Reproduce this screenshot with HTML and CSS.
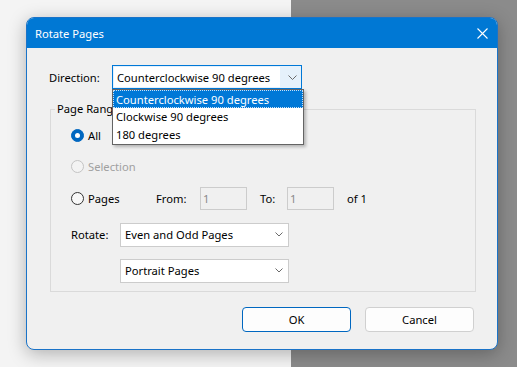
FILE: index.html
```html
<!DOCTYPE html>
<html lang="en">
<head>
    <meta charset="UTF-8">
    <title>Rotate Pages</title>
    <link rel="stylesheet" href="styles.css">
</head>
<body>

<div class="dialog">
    <div class="titlebar">
        <span class="title">Rotate Pages</span>
        <svg class="close" width="11" height="11" viewBox="0 0 11 11">
            <path d="M0.5 0.5 L10.5 10.5 M10.5 0.5 L0.5 10.5" stroke="#fff" stroke-width="1.1" fill="none"/>
        </svg>
    </div>

    <div class="content">
        <div class="direction-row">
            <span class="label">Direction:</span>
            <div class="combo open">
                <span class="combo-text">Counterclockwise 90 degrees</span>
                <svg class="chevron" width="9" height="5" viewBox="0 0 9 5">
                    <path d="M0.5 0.5 L4.5 4.5 L8.5 0.5" stroke="#6a6a6a" fill="none"/>
                </svg>
                <ul class="dropdown">
                    <li class="selected">Counterclockwise 90 degrees</li>
                    <li>Clockwise 90 degrees</li>
                    <li>180 degrees</li>
                </ul>
            </div>
        </div>

        <div class="group">
            <div class="legend">Page Range</div>

            <div class="row row-all">
                <span class="radio checked"></span>
                <span>All</span>
            </div>

            <div class="row row-selection disabled">
                <span class="radio"></span>
                <span>Selection</span>
            </div>

            <div class="row row-pages">
                <span class="radio"></span>
                <span class="pages-label">Pages</span>
                <span class="from">From:</span>
                <span class="field">1</span>
                <span class="to">To:</span>
                <span class="field">1</span>
                <span class="of">of 1</span>
            </div>

            <div class="row row-rotate">
                <span class="rotate-label">Rotate:</span>
                <div class="combo plain">
                    <span class="combo-text">Even and Odd Pages</span>
                    <svg class="chevron" width="8" height="5" viewBox="0 0 8 5">
                        <path d="M0.5 0.5 L4 4 L7.5 0.5" stroke="#6a6a6a" fill="none"/>
                    </svg>
                </div>
            </div>

            <div class="row row-orient">
                <div class="combo plain">
                    <span class="combo-text">Portrait Pages</span>
                    <svg class="chevron" width="8" height="5" viewBox="0 0 8 5">
                        <path d="M0.5 0.5 L4 4 L7.5 0.5" stroke="#6a6a6a" fill="none"/>
                    </svg>
                </div>
            </div>
        </div>

        <div class="buttons">
            <button class="btn default">OK</button>
            <button class="btn">Cancel</button>
        </div>
    </div>
</div>

</body>
</html>
```

FILE: styles.css
```css
html, body {
    height: 100%;
}
body {
    margin: 0;
    font-family: "Noto Sans", "Open Sans", sans-serif;
    font-size: 11.2px;
    color: #000;
    background: linear-gradient(to right, #f4f4f4 0, #f4f4f4 291px, #8b8b8b 291px);
    overflow: hidden;
    white-space: nowrap;
}
.dialog {
    margin: 17px 0 0 26px;
    width: 472px;
    height: 333px;
    box-sizing: border-box;
    border: 1px solid #1a73c8;
    border-radius: 8px;
    background: #f0f0f0;
    box-shadow: 0 4px 18px rgba(0, 0, 0, 0.28);
}
.titlebar {
    height: 30px;
    background: #0078d4;
    border-radius: 7px 7px 0 0;
    display: flex;
    align-items: center;
    justify-content: space-between;
    padding: 0 9px 0 8px;
    color: #fff;
}
.content {
    padding: 17px 23px 0 22px;
}
.direction-row {
    display: flex;
    align-items: center;
    height: 24px;
}
.label {
    width: 63px;
}
.combo {
    position: relative;
    box-sizing: border-box;
    height: 24px;
    display: flex;
    align-items: center;
    justify-content: space-between;
}
.combo.open {
    width: 190px;
    border: 1px solid #0078d7;
    background: #e5f1fb;
    padding: 1px 0 1px 1px;
}
.combo.open .combo-text {
    background: #fff;
    height: 100%;
    width: 166px;
    display: flex;
    align-items: center;
    padding-left: 3px;
    box-sizing: border-box;
}
.combo.open .chevron {
    margin-right: 4px;
}
.dropdown {
    position: absolute;
    left: -1px;
    top: 23px;
    width: 190px;
    margin: 0;
    padding: 0;
    list-style: none;
    background: #fff;
    border: 1px solid #646464;
    box-shadow: 2px 2px 3px rgba(0, 0, 0, 0.25);
    z-index: 2;
}
.dropdown li {
    height: 18px;
    line-height: 17px;
    padding-left: 3px;
    box-sizing: border-box;
}
.dropdown li.selected {
    background: #0078d7;
    color: #fff;
    border: 1px dotted #c8e0f6;
    padding-left: 2px;
}
.group {
    margin: 20px 0 0 1px;
    width: 426px;
    box-sizing: border-box;
    border: 1px solid #dadada;
    padding: 0 0 9px 20px;
}
.legend {
    width: fit-content;
    margin: -9px 0 0 -16px;
    padding: 0 2px;
    line-height: 16px;
    background: #f0f0f0;
}
.row {
    display: flex;
    align-items: center;
}
.row-all {
    height: 20px;
    margin-top: 8px;
}
.row-selection {
    height: 20px;
    margin-top: 11px;
}
.row-pages {
    height: 23px;
    margin-top: 11px;
}
.row-rotate {
    height: 23px;
    margin-top: 13px;
}
.row-orient {
    height: 23px;
    margin-top: 13px;
    padding-left: 49px;
}
.radio {
    width: 13px;
    height: 13px;
    box-sizing: border-box;
    border-radius: 50%;
    border: 1px solid #333;
    background: #f8f8f8;
    margin-right: 4px;
    position: relative;
}
.radio.checked {
    background: #0067c0;
    border-color: #0067c0;
}
.radio.checked::after {
    content: "";
    position: absolute;
    left: 3px;
    top: 3px;
    width: 5px;
    height: 5px;
    border-radius: 50%;
    background: #fff;
}
.disabled {
    color: #a0a0a0;
}
.disabled .radio {
    border-color: #c4c4c4;
    background: #f3f3f3;
}
.pages-label {
    width: 68px;
}
.from {
    width: 44px;
}
.to {
    margin-left: 13px;
    width: 27px;
}
.field {
    width: 47px;
    height: 23px;
    box-sizing: border-box;
    border: 1px solid #cccccc;
    background: #f0f0f0;
    color: #8a8a8a;
    padding-left: 2px;
    line-height: 21px;
}
.of {
    margin-left: 13px;
}
.rotate-label {
    width: 49px;
}
.combo.plain {
    width: 169px;
    border: 1px solid #cccccc;
    background: #fff;
    padding: 0 5px 0 4px;
}
.buttons {
    display: flex;
    justify-content: flex-end;
    gap: 14px;
    margin-top: 15px;
}
.btn {
    width: 109px;
    height: 25px;
    font-family: inherit;
    font-size: 11.2px;
    color: #000;
    background: #fdfdfd;
    border: 1px solid #d0d0d0;
    border-radius: 4px;
    padding: 0;
}
.btn.default {
    border-color: #0067c0;
}
```
